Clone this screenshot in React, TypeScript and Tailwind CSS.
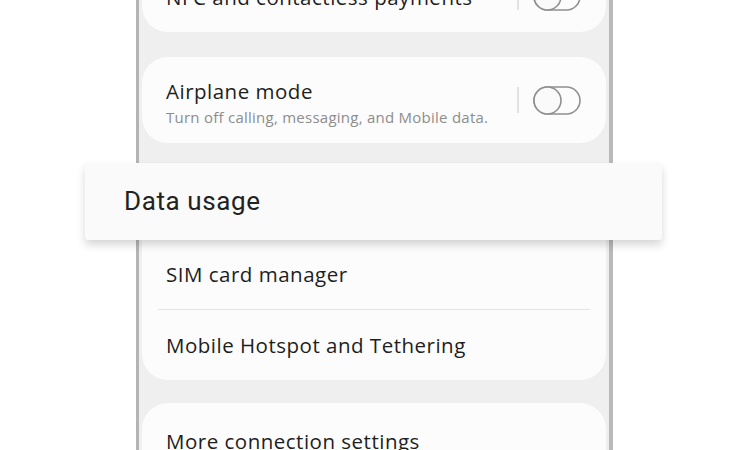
import React from "react";

function Toggle() {
  return (
    <svg width="48" height="29" viewBox="0 0 48 29" className="shrink-0">
      <rect x="1" y="1" width="46" height="27" rx="13.5" fill="none" stroke="#8f8f8f" strokeWidth="1.6" />
      <circle cx="14.5" cy="14.5" r="13.5" fill="#fafafa" stroke="#8f8f8f" strokeWidth="1.6" />
    </svg>
  );
}

function SwitchSlot() {
  return (
    <div className="flex items-center gap-[14px]">
      <div className="w-[2px] h-[26px] bg-[#e2e2e2]" />
      <Toggle />
    </div>
  );
}

const rowText = "text-[20.5px] tracking-[0.5px] text-[#1e1e1e]";

export default function App() {
  return (
    <div
      className="relative w-[750px] h-[450px] overflow-hidden bg-white"
      style={{ fontFamily: '"Open Sans", "Noto Sans", sans-serif' }}
    >
      {/* phone body */}
      <div className="ml-[136px] w-[477px] h-[450px] border-l-[3px] border-r-[4px] border-l-[#b4b4b4] border-r-[#b9b9b9] bg-[#efefef] px-[3px] flex flex-col">
        {/* NFC card, scrolled partly off the top */}
        <div className="-mt-[50px] h-[82px] rounded-[26px] bg-[#fcfcfc] flex items-end pb-[21px] pl-[24px] pr-[25px] justify-between shrink-0">
          <span className={`${rowText} leading-[28px]`}>NFC and contactless payments</span>
          <SwitchSlot />
        </div>

        {/* Airplane mode */}
        <div className="mt-[25px] h-[86px] rounded-[26px] bg-[#fcfcfc] flex items-center justify-between pl-[24px] pr-[25px] shrink-0">
          <div className="flex flex-col pt-[6px]">
            <span className={`${rowText} leading-[28px]`}>Airplane mode</span>
            <span className="text-[15px] tracking-[0.25px] leading-[24px] text-[#8d8d8d]">
              Turn off calling, messaging, and Mobile data.
            </span>
          </div>
          <SwitchSlot />
        </div>

        {/* Data usage / SIM / Hotspot group */}
        <div className="mt-[22px] h-[215px] rounded-[26px] bg-[#fcfcfc] flex flex-col shrink-0">
          <div className="h-[74px] flex items-center pl-[24px]">
            <span className={rowText}>Data usage</span>
          </div>
          <div className="h-[70px] flex items-center pl-[24px]">
            <span className={rowText}>SIM card manager</span>
          </div>
          <div className="mx-[16px] h-px bg-[#e4e4e4]" />
          <div className="h-[70px] flex items-center pl-[24px]">
            <span className={rowText}>Mobile Hotspot and Tethering</span>
          </div>
        </div>

        {/* More connection settings */}
        <div className="mt-[23px] h-[90px] rounded-[26px] bg-[#fcfcfc] flex items-start pt-[23px] pl-[24px] shrink-0">
          <span className={`${rowText} leading-[30px]`}>More connection settings</span>
        </div>
      </div>

      {/* lifted "Data usage" row */}
      <div className="absolute left-[85px] top-[163px] w-[577px] h-[77px] rounded-[3px] bg-[#fafafa] shadow-[0_5px_9px_rgba(0,0,0,0.16)] flex items-center pl-[39px]">
        <span
          className="text-[26px] tracking-[0.6px] text-[#222222]"
          style={{ fontFamily: 'Roboto, "Noto Sans", sans-serif' }}
        >
          Data usage
        </span>
      </div>
    </div>
  );
}
